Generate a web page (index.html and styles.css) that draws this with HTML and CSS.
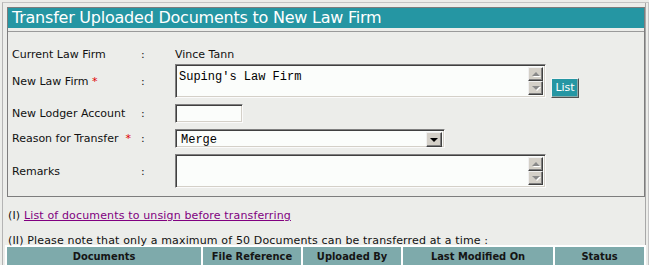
FILE: index.html
```html
<!DOCTYPE html>
<html>
<head>
<meta charset="utf-8">
<title>Transfer Uploaded Documents to New Law Firm</title>
<link rel="stylesheet" href="styles.css">
</head>
<body>
<div class="frame">
  <div class="panel">
    <div class="title">Transfer Uploaded Documents to New Law Firm</div>
    <div class="form">
      <div class="row r1">
        <div class="lbl">Current Law Firm</div>
        <div class="colon">:</div>
        <div class="val">Vince Tann</div>
      </div>
      <div class="row r2">
        <div class="lbl">New Law Firm <span class="req">*</span></div>
        <div class="colon">:</div>
        <div class="val">
          <div class="ta">
            <div class="ta-text">Suping's Law Firm</div>
            <div class="sb"><span class="sbtn"><span class="tri up"></span></span><span class="sbtn"><span class="tri down"></span></span></div>
          </div>
          <button class="list-btn" type="button">List</button>
        </div>
      </div>
      <div class="row r3">
        <div class="lbl">New Lodger Account</div>
        <div class="colon">:</div>
        <div class="val"><div class="inp"></div></div>
      </div>
      <div class="row r4">
        <div class="lbl">Reason for Transfer&nbsp;&nbsp;<span class="req">*</span></div>
        <div class="colon">:</div>
        <div class="val">
          <div class="sel">
            <div class="sel-text">Merge</div>
            <span class="sbtn selbtn"><span class="tri dark"></span></span>
          </div>
        </div>
      </div>
      <div class="row r5">
        <div class="lbl">Remarks</div>
        <div class="colon">:</div>
        <div class="val">
          <div class="ta">
            <div class="ta-text"></div>
            <div class="sb"><span class="sbtn"><span class="tri up"></span></span><span class="sbtn"><span class="tri down"></span></span></div>
          </div>
        </div>
      </div>
    </div>
  </div>
  <p class="note n1">(I) <a class="lnk" href="#">List of documents to unsign before transferring</a></p>
  <p class="note n2">(II) Please note that only a maximum of 50 Documents can be transferred at a time :</p>
  <table class="docs">
    <thead>
      <tr>
        <th class="c1">Documents</th>
        <th class="c2">File Reference</th>
        <th class="c3">Uploaded By</th>
        <th class="c4">Last Modified On</th>
        <th class="c5">Status</th>
      </tr>
    </thead>
  </table>
</div>
</body>
</html>
```

FILE: styles.css
```css
html, body {
  margin: 0;
  padding: 0;
  overflow: hidden;
  background: #ecedea;
}
body {
  font-family: "DejaVu Sans", Verdana, sans-serif;
  font-size: 11px;
  color: #111;
}
.frame {
  margin: 2px 0 0 2px;
  width: 638px;
  min-height: 320px;
  border-top: 1px solid #c4c4c4;
  border-left: 1px solid #b4b4b4;
  border-right: 1px solid #c4c4c4;
  padding: 4px 3px 0 4px;
  box-shadow: inset -2px 0 0 #ecedea, inset -3px 0 0 #a8a8a8;
}
.panel {
  border: 1px solid #7d7d7d;
  background: #ecedea;
}
.title {
  background: #2596a3;
  color: #fff;
  font-size: 16px;
  letter-spacing: -0.23px;
  line-height: 20px;
  height: 20px;
  padding-left: 4px;
  white-space: nowrap;
}
.form {
  margin-top: 3px;
  border-top: 1px solid #9a9a9a;
  padding: 14px 0 8px 4px;
}
.row {
  display: grid;
  grid-template-columns: 129px 34px 1fr;
  align-items: center;
}
.r1 { height: 17px; margin-bottom: 1px; }
.r2 { height: 34px; }
.r3 { height: 19px; margin-top: 6px; }
.r4 { height: 19px; margin-top: 6px; }
.r5 { height: 34px; margin-top: 6px; }
.lbl { white-space: nowrap; }
.req { color: #e00000; }
.val {
  display: flex;
  align-items: stretch;
  height: 100%;
}
.r1 .val { align-items: center; }
.ta, .inp, .sel {
  box-sizing: border-box;
  background: #fbfdfb;
  border-top: 1px solid #808080;
  border-left: 1px solid #808080;
  border-right: 1px solid #fafafa;
  border-bottom: 1px solid #fafafa;
  box-shadow: inset 1px 1px 0 #404040, inset -1px -1px 0 #d4d0c8;
}
.ta {
  width: 371px;
  height: 34px;
  display: flex;
  padding: 2px;
}
.ta-text {
  flex: 1;
  font-family: "Liberation Mono", "Courier New", monospace;
  font-size: 12px;
  line-height: 14px;
  padding: 3px 0 0 1px;
  color: #000;
  white-space: nowrap;
}
.sb {
  width: 15px;
  display: flex;
  flex-direction: column;
  justify-content: space-between;
}
.sbtn {
  box-sizing: border-box;
  display: flex;
  align-items: center;
  justify-content: center;
  background: #d4d0c8;
  border-top: 1px solid #f0f0f0;
  border-left: 1px solid #f0f0f0;
  border-right: 1px solid #404040;
  border-bottom: 1px solid #404040;
  box-shadow: inset -1px -1px 0 #808080;
  height: 14px;
}
.tri {
  width: 0;
  height: 0;
  border-left: 4px solid transparent;
  border-right: 4px solid transparent;
}
.tri.up {
  border-bottom: 4px solid #8a8a8a;
  filter: drop-shadow(1px 1px 0 #fff);
}
.tri.down {
  border-top: 4px solid #8a8a8a;
  filter: drop-shadow(1px 1px 0 #fff);
}
.tri.dark {
  border-top: 4px solid #000;
}
.list-btn {
  align-self: flex-end;
  margin: 0 0 0 5px;
  width: 28px;
  height: 20px;
  padding: 0;
  background: #2596a3;
  color: #fff;
  font-family: "DejaVu Sans", Verdana, sans-serif;
  font-size: 11px;
  line-height: 14px;
  border-top: 1px solid #f4f4f4;
  border-left: 1px solid #f4f4f4;
  border-right: 1px solid #505050;
  border-bottom: 1px solid #505050;
  box-shadow: inset -1px -1px 0 #8aa;
}
.inp {
  width: 68px;
  height: 19px;
}
.sel {
  width: 270px;
  height: 19px;
  display: flex;
  align-items: stretch;
  padding: 2px;
}
.sel-text {
  flex: 1;
  font-family: "Liberation Mono", "Courier New", monospace;
  font-size: 12px;
  line-height: 16px;
  padding-left: 3px;
  color: #000;
}
.selbtn {
  width: 16px;
  height: 15px;
}
.note {
  margin: 0;
  padding-left: 1px;
  line-height: 13px;
  letter-spacing: 0.15px;
  white-space: nowrap;
}
.n1 { margin-top: 12px; }
.n2 { margin-top: 12px; margin-bottom: -2px; }
.lnk {
  color: #800080;
  text-decoration: underline;
}
.docs {
  margin-left: -2px;
  width: 641px;
  background: #fff;
  border-spacing: 2px;
  table-layout: fixed;
}
.docs th {
  background: #7eaaab;
  color: #151515;
  font-family: "DejaVu Sans Condensed", "DejaVu Sans", sans-serif;
  font-weight: bold;
  font-size: 11px;
  height: 19px;
  padding: 0;
  text-align: center;
  white-space: nowrap;
}
.docs .c1 { width: 194px; }
.docs .c2 { width: 98px; }
.docs .c3 { width: 98px; }
.docs .c4 { width: 150px; }
.docs .c5 { width: 89px; }
```
